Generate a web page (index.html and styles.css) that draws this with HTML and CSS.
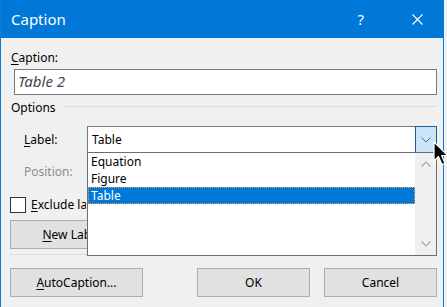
FILE: index.html
```html
<!DOCTYPE html>
<html>
<head>
<meta charset="utf-8">
<link rel="stylesheet" href="styles.css">
</head>
<body>
<div class="window">
  <div class="titlebar">
    <span class="title">Caption</span>
    <span class="help">?</span>
    <svg class="close" width="11" height="11" viewBox="0 0 11 11"><path d="M0.5 0.5 L10.5 10.5 M10.5 0.5 L0.5 10.5" stroke="#fff" stroke-width="1.1" fill="none"/></svg>
  </div>
  <div class="content">
    <div class="lbl"><u>C</u>aption:</div>
    <div class="textbox">Table 2</div>
    <div class="group-head"><span class="group-title">Options</span><div class="rule"></div></div>
    <div class="row">
      <span class="field-label"><u>L</u>abel:</span>
      <div class="combo">
        <span class="combo-text">Table</span>
        <span class="drop-btn"><svg width="10" height="6" viewBox="0 0 10 6"><path d="M0.5 0.5 L5 5 L9.5 0.5" stroke="#5d6b79" stroke-width="1" fill="none"/></svg></span>
        <div class="listbox">
          <div class="items">
            <div class="item">Equation</div>
            <div class="item">Figure</div>
            <div class="item selected">Table</div>
          </div>
          <div class="scrollbar">
            <svg class="arrow-up" width="10" height="6" viewBox="0 0 10 6"><path d="M0.5 5.5 L5 1 L9.5 5.5" stroke="#a6a6a6" stroke-width="1.2" fill="none"/></svg>
            <svg class="arrow-down" width="10" height="6" viewBox="0 0 10 6"><path d="M0.5 0.5 L5 5 L9.5 0.5" stroke="#a6a6a6" stroke-width="1.2" fill="none"/></svg>
          </div>
        </div>
      </div>
    </div>
    <div class="row">
      <span class="field-label disabled">Position:</span>
    </div>
    <div class="check-row">
      <span class="checkbox"></span>
      <span class="check-text"><u>E</u>xclude label from caption</span>
    </div>
    <div class="btn-row">
      <div class="btn-clip">
        <button class="btn wide"><u>N</u>ew Label...</button>
      </div>
    </div>
    <div class="sep"></div>
    <div class="bottom">
      <button class="btn wide"><u>A</u>utoCaption...</button>
      <button class="btn ok">OK</button>
      <button class="btn cancel">Cancel</button>
    </div>
  </div>
  <svg class="cursor" width="16" height="26" viewBox="0 0 16 26"><path d="M1 1 L1 20 L5.5 15.5 L9 23.5 L12 22.2 L8.6 14.5 L14.5 14.5 Z" fill="#000" stroke="#fff" stroke-width="1.2" stroke-linejoin="round"/></svg>
</div>
</body>
</html>
```

FILE: styles.css
```css
* { box-sizing: border-box; }
html, body { margin: 0; padding: 0; }
body {
  width: 447px;
  height: 307px;
  overflow: hidden;
  background: #f0f0f0;
  font-family: "Noto Sans", sans-serif;
  font-size: 12px;
  color: #000;
}
u { text-decoration: underline; text-underline-offset: 2px; }
.window {
  position: relative;
  width: 444px;
  height: 307px;
  border-left: 1px solid #0f7ad6;
  border-right: 1px solid #0f7ad6;
  background: #f0f0f0;
}
.titlebar {
  height: 38px;
  background: #0078d7;
  color: #fff;
  display: flex;
  align-items: center;
  padding: 0 20px 0 10px;
}
.title { font-size: 15px; flex: 1; }
.help { font-size: 15px; margin-right: 48px; }
.close { display: block; }
.content {
  padding: 12px 6px 0 9px;
}
.lbl { height: 16px; line-height: 16px; padding-left: 1px; }
.textbox {
  margin: 3px 0 0 4px;
  height: 26px;
  border: 1px solid #7a7a7a;
  background: #fff;
  padding-left: 3px;
  font-size: 15px;
  font-style: italic;
  line-height: 23px;
  color: #3f4753;
}
.group-head {
  margin-top: 5px;
  height: 16px;
  line-height: 16px;
  display: flex;
}
.group-title { padding-left: 1px; }
.rule {
  flex: 1;
  height: 1px;
  margin: 6px 0 0 7px;
  background: #dcdcdc;
}
.row {
  margin-top: 10px;
  height: 27px;
  display: flex;
  align-items: center;
}
.row + .row { margin-top: 5px; }
.field-label { width: 77px; padding-left: 14px; }
.field-label.disabled { color: #8d8d8d; }
.combo {
  position: relative;
  flex: 1;
  height: 27px;
  border: 1px solid #7a7a7a;
  background: #fff;
  display: flex;
  align-items: center;
}
.combo-text { flex: 1; padding-left: 4px; line-height: 16px; }
.drop-btn {
  align-self: stretch;
  margin: -1px -1px -1px 0;
  width: 22px;
  background: #cce4f7;
  border: 1px solid #1b5f9e;
  display: flex;
  align-items: center;
  justify-content: center;
}
.drop-btn svg { display: block; margin-top: 1px; }
.listbox {
  position: absolute;
  top: 100%;
  left: -1px;
  right: -1px;
  height: 104px;
  border: 1px solid #6e6e6e;
  background: #fff;
  display: flex;
  z-index: 2;
}
.items { flex: 1; }
.item {
  height: 17px;
  line-height: 17px;
  padding-left: 3px;
}
.item.selected {
  background: #0078d7;
  color: #fff;
  outline: 1px dotted #f4a460;
  outline-offset: -1px;
}
.scrollbar {
  width: 21px;
  background: #f0f0f0;
  display: flex;
  flex-direction: column;
  justify-content: space-between;
  align-items: center;
  padding: 8px 0 8px;
}
.scrollbar svg { display: block; }
.check-row {
  margin-top: 12px;
  height: 16px;
  display: flex;
  align-items: center;
}
.checkbox {
  flex: none;
  width: 16px;
  height: 16px;
  border: 1px solid #333;
  background: #fff;
}
.check-text {
  margin-left: 5px;
  line-height: 16px;
  width: 55px;
  overflow: hidden;
  white-space: nowrap;
}
.btn-row { margin-top: 7px; display: flex; }
.btn-clip { width: 77px; overflow: hidden; }
.btn {
  height: 29px;
  border: 1px solid #adadad;
  background: #e1e1e1;
  font-family: "Noto Sans", sans-serif;
  font-size: 12px;
  color: #000;
  padding: 0;
  margin: 0;
  white-space: nowrap;
}
.wide { width: 133px; }
.btn-clip .btn { display: block; }
.sep {
  margin-top: 5px;
  height: 1px;
  background: #d9d9d9;
}
.bottom {
  margin-top: 13px;
  display: flex;
}
.ok { width: 113px; margin-left: auto; }
.cancel { width: 113px; margin-left: 14px; }
.cursor {
  position: absolute;
  left: 432px;
  top: 141px;
  z-index: 3;
}
```
